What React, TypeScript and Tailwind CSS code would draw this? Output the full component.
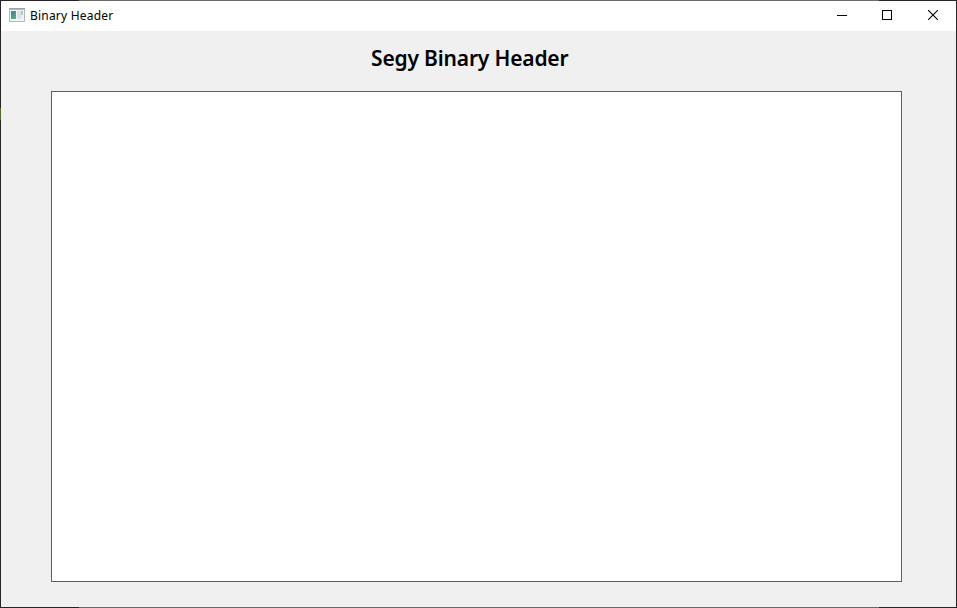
function AppIcon() {
  return (
    <svg width="16" height="14" viewBox="0 0 16 14" shapeRendering="crispEdges">
      <defs>
        <linearGradient id="pane" x1="0" y1="0" x2="0.6" y2="1">
          <stop offset="0" stopColor="#4c78a8" />
          <stop offset="1" stopColor="#55ad78" />
        </linearGradient>
      </defs>
      <rect width="16" height="14" fill="#b4b8be" />
      <rect width="16" height="1" fill="#9da3ac" />
      <rect x="1" y="2" width="14" height="11" fill="#f4f5f7" />
      <rect x="2" y="3" width="5" height="8" fill="url(#pane)" />
      <rect x="8" y="3" width="4" height="8" fill="#dfe2e5" />
      <rect x="12" y="3" width="2" height="4" fill="#a9c9b6" />
      <rect x="12" y="7" width="2" height="4" fill="#eceef0" />
    </svg>
  );
}

function TitleBar() {
  return (
    <header className="flex h-[30px] shrink-0 items-center bg-white pl-2">
      <div className="pb-0.5">
        <AppIcon />
      </div>
      <span className="ml-[5px] flex-1 whitespace-nowrap text-[12px] leading-[30px] tracking-[0.2px]">
        Binary Header
      </span>
      <button aria-label="Minimize" className="flex h-full w-[46px] items-center justify-center pb-0.5">
        <svg width="10" height="10" shapeRendering="crispEdges">
          <path d="M0 5.5H10" stroke="#000" />
        </svg>
      </button>
      <button aria-label="Maximize" className="flex h-full w-[45px] items-center pb-0.5 pl-[17px]">
        <svg width="10" height="10" shapeRendering="crispEdges">
          <path d="M.5 .5H9.5V9.5H.5Z" fill="none" stroke="#000" />
        </svg>
      </button>
      <button aria-label="Close" className="flex h-full w-[46px] items-center justify-center pb-0.5">
        <svg width="10" height="10">
          <path d="M0 0L10 10M10 0L0 10" stroke="#000" strokeWidth="1.1" />
        </svg>
      </button>
    </header>
  );
}

function HorizontalEdge() {
  return (
    <div className="flex h-px shrink-0">
      <div className="w-[79px] bg-[#252326]" />
      <div className="w-[800px] bg-[#6b6a6b]" />
      <div className="flex-1 bg-[#252326]" />
    </div>
  );
}

export default function App() {
  return (
    <div className="flex h-[608px] w-[957px] flex-col overflow-hidden bg-[#f0f0f0] font-['Noto_Sans','Open_Sans',sans-serif] text-black">
      <HorizontalEdge />
      <div className="flex min-h-0 flex-1">
        <div className="flex w-px flex-col bg-[#252326] pt-[107px]">
          <div className="h-3 bg-[#4f6a28]" />
        </div>
        <div className="flex flex-1 flex-col">
          <TitleBar />
          <main className="flex flex-1 flex-col bg-[#f0f0f0] pr-[54px] pb-[25px] pl-[50px]">
            <h1 className="h-[60px] pl-[320px] text-[21px] leading-[55px] font-semibold tracking-[-0.17px] whitespace-nowrap">
              Segy Binary Header
            </h1>
            <div role="textbox" aria-label="Binary header" className="flex-1 border border-[#0078d7] bg-white" />
          </main>
        </div>
        <div className="w-px bg-[#252326]" />
      </div>
      <HorizontalEdge />
    </div>
  );
}
